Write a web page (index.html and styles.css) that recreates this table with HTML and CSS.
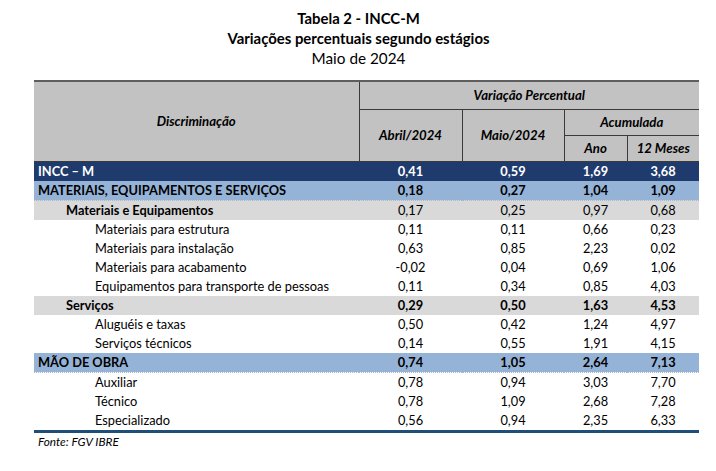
FILE: index.html
```html
<!DOCTYPE html>
<html lang="pt">
<head>
<meta charset="utf-8">
<link rel="stylesheet" href="styles.css">
</head>
<body>
<div class="page">
  <div class="titles">
    <div class="t1">Tabela 2 - INCC-M</div>
    <div class="t2">Variações percentuais segundo estágios</div>
    <div class="t3">Maio de 2024</div>
  </div>
  <table class="tbl">
    <colgroup>
      <col class="c-desc"><col class="c-abr"><col class="c-mai"><col class="c-ano"><col class="c-12m">
    </colgroup>
    <thead>
      <tr class="h1">
        <th rowspan="3" class="hdesc">Discriminação</th>
        <th colspan="4">Variação Percentual</th>
      </tr>
      <tr class="h2">
        <th rowspan="2">Abril/2024</th>
        <th rowspan="2">Maio/2024</th>
        <th colspan="2">Acumulada</th>
      </tr>
      <tr class="h3">
        <th>Ano</th>
        <th>12 Meses</th>
      </tr>
    </thead>
    <tbody>
      <tr class="r-top"><td class="l0">INCC – M</td><td>0,41</td><td>0,59</td><td>1,69</td><td>3,68</td></tr>
      <tr class="r-grp"><td class="l0">MATERIAIS, EQUIPAMENTOS E SERVIÇOS</td><td>0,18</td><td>0,27</td><td>1,04</td><td>1,09</td></tr>
      <tr class="r-sub"><td class="l1">Materiais e Equipamentos</td><td>0,17</td><td>0,25</td><td>0,97</td><td>0,68</td></tr>
      <tr><td class="l2">Materiais para estrutura</td><td>0,11</td><td>0,11</td><td>0,66</td><td>0,23</td></tr>
      <tr><td class="l2">Materiais para instalação</td><td>0,63</td><td>0,85</td><td>2,23</td><td>0,02</td></tr>
      <tr><td class="l2">Materiais para acabamento</td><td>-0,02</td><td>0,04</td><td>0,69</td><td>1,06</td></tr>
      <tr><td class="l2">Equipamentos para transporte de pessoas</td><td>0,11</td><td>0,34</td><td>0,85</td><td>4,03</td></tr>
      <tr class="r-sub r-bold"><td class="l1">Serviços</td><td>0,29</td><td>0,50</td><td>1,63</td><td>4,53</td></tr>
      <tr><td class="l2">Aluguéis e taxas</td><td>0,50</td><td>0,42</td><td>1,24</td><td>4,97</td></tr>
      <tr><td class="l2">Serviços técnicos</td><td>0,14</td><td>0,55</td><td>1,91</td><td>4,15</td></tr>
      <tr class="r-grp"><td class="l0">MÃO DE OBRA</td><td>0,74</td><td>1,05</td><td>2,64</td><td>7,13</td></tr>
      <tr><td class="l2">Auxiliar</td><td>0,78</td><td>0,94</td><td>3,03</td><td>7,70</td></tr>
      <tr><td class="l2">Técnico</td><td>0,78</td><td>1,09</td><td>2,68</td><td>7,28</td></tr>
      <tr class="r-last"><td class="l2">Especializado</td><td>0,56</td><td>0,94</td><td>2,35</td><td>6,33</td></tr>
    </tbody>
  </table>
  <div class="source">Fonte: FGV IBRE</div>
</div>
</body>
</html>
```

FILE: styles.css
```css
html, body {
  margin: 0;
  padding: 0;
  background: #ffffff;
}
body {
  font-family: Lato, "Open Sans", "Liberation Sans", sans-serif;
  color: #000;
}
.page {
  padding: 8px 0 0 34px;
  width: 665px;
}
.titles {
  text-align: center;
  margin-left: -16px;
}
.t1, .t2 {
  font-weight: 700;
  font-size: 14.9px;
  line-height: 20px;
}
.t3 {
  font-size: 15.3px;
  line-height: 20px;
}
.tbl {
  margin-top: 12px;
  width: 665px;
  border-collapse: collapse;
  table-layout: fixed;
  font-size: 12.8px;
}
.c-desc { width: 325px; }
.c-abr { width: 103px; }
.c-mai { width: 102px; }
.c-ano { width: 63px; }
.c-12m { width: 72px; }

.tbl thead th {
  background: #c2c2c2;
  font-style: italic;
  font-weight: 700;
  font-size: 13.2px;
  border: 1px solid #3a3a3a;
  padding: 0;
  text-align: center;
}
.tbl thead tr.h1 th {
  border-top: 2px solid #5e5e5e;
}
.tbl thead th:first-child,
.tbl thead tr.h1 th.hdesc {
  border-left: none;
}
.tbl thead tr.h1 th:last-child,
.tbl thead tr.h2 th:last-child,
.tbl thead tr.h3 th:last-child {
  border-right: none;
}
.tbl thead tr.h2 th:first-child { border-left: 1px solid #3a3a3a; }
.tbl thead tr.h3 th:first-child { border-left: 1px solid #3a3a3a; }
.h1 { height: 28px; }
.h2 { height: 26px; }
.h3 { height: 26px; }

.tbl tbody td {
  height: 19px;
  padding: 0;
  text-align: center;
  line-height: 19px;
  white-space: nowrap;
}
.tbl tbody td.l0 { text-align: left; padding-left: 4px; font-weight: 700; }
.tbl tbody td.l1 { text-align: left; padding-left: 32px; font-weight: 700; }
.tbl tbody td.l2 { text-align: left; padding-left: 61px; }

.r-top td {
  background: #1f3b6d;
  color: #ffffff;
  font-weight: 700;
}
.r-grp td {
  background: #95b3d7;
  font-weight: 700;
  border-bottom: 1px dotted #a8b8cc;
}
.r-sub td {
  background: #d9d9d9;
}
.r-bold td { font-weight: 700; }
.r-last td {
  border-bottom: 3px solid #1f4e79;
}
.source {
  font-style: italic;
  font-size: 11.8px;
  padding-left: 4px;
  margin-top: 1px;
}
```
